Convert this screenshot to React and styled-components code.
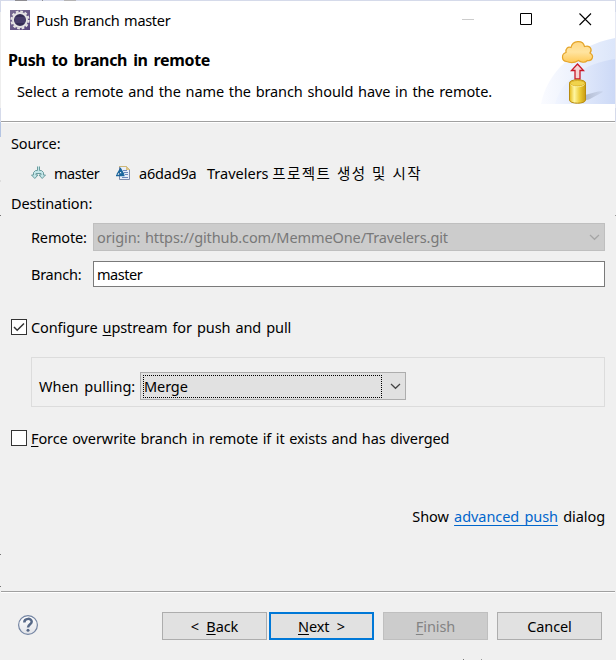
import React from 'react';
import styled, { createGlobalStyle } from 'styled-components';

const GlobalStyle = createGlobalStyle`
  * { box-sizing: border-box; }
  body { margin: 0; background: #f0f0f0; }
  button, input { font: inherit; }
`;

const Screen = styled.div`
  display: grid;
  grid-template-columns: 1px 614px 1px;
  grid-template-rows: 1px 659px;
  width: 616px;
  height: 660px;
  overflow: hidden;
  font-family: 'Noto Sans', 'Noto Sans CJK KR', sans-serif;
  font-size: 14.5px;
  line-height: 20px;
  color: #000;
`;

const TopEdge = styled.div`
  grid-column: 1 / -1;
  background: linear-gradient(90deg, #d5daea 0 15px, #8d8c91 15px 27px, #d5daea 27px 42px, #8d8c91 42px 43px, #d5daea 43px 64px, #b4b3b4 64px 76px, #d5daea 76px);
`;

const LeftEdge = styled.div`
  background: linear-gradient(#d5daea 0 11px, #eeeeee 11px 107px, #d5daea 107px 121px, #b4c4e2 121px 136px, #f0f0f0 136px 179px, #dedede 179px 181px, #f0f0f0 181px 214px, #777 214px 215px, #f0f0f0 215px 553px, #777 553px 554px, #f0f0f0 554px 585px, #777 585px 586px, #f0f0f0 586px);
`;

const RightEdge = styled.div`
  background: linear-gradient(#d5daea 0 11px, #e7eaf4 11px 107px, #d5daea 107px 121px, #f0f0f0 121px 214px, #999 214px 215px, #f0f0f0 215px);
`;

const Dialog = styled.main`
  display: flex;
  flex-direction: column;
  background: #f0f0f0;
`;

const TitleBar = styled.div`
  display: flex;
  align-items: center;
  height: 37px;
  padding-left: 9px;
  background: #fff;
`;

const Text = styled.span`
  white-space: pre;
  letter-spacing: ${(p) => p.$spacing || 0}px;
  word-spacing: ${(p) => p.$word || 0}px;
`;

const TitleText = styled(Text)`
  flex: 1;
  margin-left: 6px;
`;

const Controls = styled.div`
  display: flex;
  gap: 46px;
  margin-right: 23px;
`;

const Control = styled.svg`
  display: block;
  width: 13px;
  height: 13px;
`;

const Header = styled.header`
  display: flex;
  justify-content: space-between;
  height: 85px;
  background: #fff;
  border-bottom: 1px solid #fff;
  box-shadow: inset 0 -1px #a0a0a0;
`;

const HeaderText = styled.div`
  display: flex;
  flex-direction: column;
  gap: 11px;
  padding: 12px 0 0 7px;
`;

const Heading = styled.h1`
  margin: 0;
  font-size: 16px;
  line-height: 20px;
  font-weight: 700;
  letter-spacing: -0.35px;
  word-spacing: 2.2px;
  white-space: nowrap;
`;

const Description = styled(Text)`
  padding-left: 9px;
`;

const Content = styled.section`
  display: flex;
  flex-direction: column;
  height: 468px;
  padding: 10px 10px 0;
`;

const SourceRow = styled.div`
  display: flex;
  align-items: center;
  height: 20px;
  margin: 10px 0;
  padding-left: 20px;
`;

const Branch = styled(Text)`
  width: 61px;
  margin-left: 7px;
`;

const Commit = styled(Text)`
  width: 68px;
  margin-left: 8px;
`;

const Fields = styled.div`
  display: grid;
  grid-template-columns: 62px 512px;
  row-gap: 10px;
  align-items: center;
  margin: 10px 0 0 20px;
`;

const Combo = styled.div`
  display: flex;
  align-items: center;
  justify-content: space-between;
  width: ${(p) => p.$width}px;
  height: 28px;
  padding: 0 4px 0 2px;
  border: 1px solid ${(p) => (p.$disabled ? '#bfbfbf' : '#adadad')};
  background: ${(p) => (p.$disabled ? '#cccccc' : '#e1e1e1')};
  color: ${(p) => (p.$disabled ? '#787878' : '#000')};
`;

const ComboValue = styled(Text)`
  flex: 1;
  height: 23px;
  line-height: 20px;
  margin-right: ${(p) => (p.$focused ? 8 : 4)}px;
  border: ${(p) => (p.$focused ? '1px dotted #000' : '1px solid transparent')};
`;

const TextInput = styled.input`
  width: 512px;
  height: 26px;
  padding: 0 3px;
  border: 1px solid #7a7a7a;
  outline: none;
  background: #fff;
  color: #000;
  letter-spacing: -0.45px;
`;

const CheckRow = styled.label`
  display: flex;
  align-items: center;
  gap: 4px;
  height: 20px;
  margin-top: ${(p) => p.$top}px;
`;

const CheckBox = styled.span`
  display: flex;
  width: 16px;
  height: 16px;
  border: 1px solid #333;
  background: #fff;
`;

const Underlined = styled.span`
  text-decoration: underline;
  text-decoration-thickness: 1px;
  text-underline-offset: 2px;
  text-decoration-skip-ink: none;
`;

const Group = styled.div`
  display: flex;
  align-items: center;
  gap: 4px;
  height: 50px;
  margin: 20px 0 0 20px;
  padding: 8px 0 0 7px;
  border: 1px solid #dcdcdc;
`;

const PullLabel = styled(Text)`
  width: 97px;
`;

const Advanced = styled.div`
  margin-top: 58px;
  text-align: right;
`;

const Link = styled.a`
  color: #0066cc;
  text-decoration: underline;
  text-decoration-thickness: 1px;
  text-underline-offset: 3px;
  text-decoration-skip-ink: none;
`;

const Footer = styled.footer`
  display: flex;
  align-items: flex-start;
  height: 69px;
  padding: 19px 13px 0 16px;
  border-top: 1px solid #a0a0a0;
  box-shadow: inset 0 1px #fff;
  background: linear-gradient(#777, #777) 462px 100% / 1px 1px no-repeat, linear-gradient(#999, #999) 480px 100% / 1px 1px no-repeat;
`;

const Buttons = styled.div`
  display: flex;
  margin: 1px 0 0 auto;
`;

const Button = styled.button`
  width: 105px;
  height: 28px;
  margin-left: ${(p) => p.$gap || 0}px;
  padding: 0 0 1px;
  border: ${(p) => (p.$primary ? '2px solid #0078d7' : `1px solid ${p.disabled ? '#bfbfbf' : '#adadad'}`)};
  background: ${(p) => (p.disabled ? '#cccccc' : '#e1e1e1')};
  color: ${(p) => (p.disabled ? '#838383' : '#000')};
  letter-spacing: -0.1px;
  white-space: pre;
`;

const Icon = styled.svg`
  display: block;
  flex: none;
`;

const Chevron = ({ color }) => (
  <Icon width="11" height="8" viewBox="0 0 11 8" fill="none">
    <path d="M1 2l4.500 4.300L10 2" stroke={color} strokeWidth="1.2" />
  </Icon>
);

const AppIcon = () => (
  <Icon width="20" height="20" viewBox="0 0 20 20">
    <defs>
      <linearGradient id="gear" x2="1" y2="1">
        <stop stopColor="#796d92" /><stop offset="1" stopColor="#57447d" />
      </linearGradient>
    </defs>
    <rect width="20" height="20" fill="url(#gear)" />
    <circle cx="10" cy="10" r="8.6" fill="none" stroke="#e8e5e5" strokeWidth="2" strokeDasharray="2.7 1.803" />
    <circle cx="10" cy="10" r="7" fill="#342c54" stroke="#e4e2e4" strokeWidth="2" />
    <path d="M5 8h10M4.500 10h11M5 12h10" stroke="#62568a" strokeWidth=".8" />
  </Icon>
);

const Banner = () => (
  <Icon width="74" height="66" viewBox="0 0 74 66">
    <defs>
      <linearGradient id="outer"><stop stopColor="#fafbff" /><stop offset="1" stopColor="#dce6fa" /></linearGradient>
      <linearGradient id="inner"><stop stopColor="#f1f5ff" /><stop offset="1" stopColor="#ccd9f6" /></linearGradient>
      <linearGradient id="cloud" x2="0" y2="1"><stop stopColor="#ffd884" /><stop offset=".5" stopColor="#ffe4a0" /><stop offset="1" stopColor="#ffc956" /></linearGradient>
      <linearGradient id="drum"><stop stopColor="#e5ba19" /><stop offset=".3" stopColor="#fff6a1" /><stop offset=".65" stopColor="#eccb35" /><stop offset="1" stopColor="#c99b13" /></linearGradient>
      <linearGradient id="shade"><stop stopColor="#8d96ad" stopOpacity=".6" /><stop offset="1" stopColor="#a9b4cc" stopOpacity=".25" /></linearGradient>
    </defs>
    <path d="M0 66C6 35 33 8 74 0v66z" fill="url(#outer)" />
    <path d="M14 66C20 43 43 25 74 21v45z" fill="url(#inner)" />
    <path d="M44 57l13-3.500q7-1 4 1L48 61.500l-5 1z" fill="url(#shade)" />
    <path d="M25.500 23.500C20.500 23 20 16 25 14.500C24.500 10 27 8.500 30 9.500C31.500 2 42 1.500 43.500 8.500C49.500 6.500 51.500 12 49 15C53.500 17.500 51.500 23.500 46.500 22.500C43.500 25.500 39.500 24 37.500 22.500C33.500 25 29 25 25.500 23.500Z" fill="url(#cloud)" stroke="#e5a52a" strokeWidth="1.2" />
    <path d="M36.500 26l6 6.500h-3.500V41h-5v-8.500h-3.500z" fill="#f6d3d4" stroke="#c91a2a" strokeWidth="1.300" />
    <path d="M28.500 45c0-4.300 16-4.300 16 0v17c0 4.300-16 4.300-16 0z" fill="url(#drum)" stroke="#b98c10" />
    <ellipse cx="36.500" cy="45.300" rx="7.500" ry="2.800" fill="#f0d34c" stroke="#d0a41b" strokeWidth=".8" />
    <path d="M29.500 46.500c2 3 12 3 14 0" fill="none" stroke="#fff5ad" strokeWidth=".8" />
  </Icon>
);

const BranchIcon = () => (
  <Icon width="16" height="16" viewBox="0 0 16 16" fill="none">
    <path d="M6.500 1.500v4h-2L2.500 7.500V10H.5L3.800 13.500 7 10H5V8.500h5V10H8L11.200 13.500 14.500 10h-2V7.500L10.500 5.500h-2v-4" fill="#c3e6e8" stroke="#6c9c9e" />
    <path d="M5.500 8.500h4" stroke="#6c9c9e" />
  </Icon>
);

const CommitIcon = () => (
  <Icon width="16" height="16" viewBox="0 0 16 16" fill="none">
    <path d="M4.500 1.500h7l3 3v10h-10z" fill="#e8eef9" stroke="#7b89aa" />
    <path d="M4 1.500h7.500l3 3" stroke="#cdb779" />
    <path d="M11 1v4h4z" fill="#dcc384" />
    <path d="M8 5.500h4M9 7.500h4M10 9.500h3M7 12.500h6" stroke="#6d89bc" />
    <path d="M1 10.500h8.500M2 9.500l3.500-6 3.500 6M4 8l1.500-3.500 2 4.500H4.500" stroke="#19659c" strokeWidth="1.300" />
  </Icon>
);

const HelpIcon = () => (
  <Icon width="22" height="28" viewBox="0 0 22 28">
    <defs><linearGradient id="help" x2="0" y2="1"><stop stopColor="#fff" /><stop offset="1" stopColor="#e1e3e8" /></linearGradient></defs>
    <circle cx="11" cy="14" r="9.400" fill="url(#help)" stroke="#7384a2" strokeWidth="1.200" />
    <path d="M7.300 11.500C7.300 6.800 14.700 6.800 14.700 10.700C14.700 13.200 11 13.200 11 16.500" fill="none" stroke="#566887" strokeWidth="2.500" />
    <circle cx="11" cy="19.300" r="1.500" fill="#566887" />
  </Icon>
);

export default function App() {
  return (
    <Screen>
      <GlobalStyle />
      <TopEdge />
      <LeftEdge />
      <Dialog>
        <TitleBar>
          <AppIcon />
          <TitleText $spacing={-0.3} $word={1.2}>Push Branch master</TitleText>
          <Controls>
            <Control viewBox="0 0 13 13"><path d="M1 6.500h12" stroke="#ccc" /></Control>
            <Control viewBox="0 0 13 13"><path d="M.5.5h11v11H.5z" fill="none" stroke="#000" /></Control>
            <Control viewBox="0 0 13 13"><path d="M.5.5l11.500 11.500m0-11.500l-11.500 11.500" stroke="#000" strokeWidth="1.100" /></Control>
          </Controls>
        </TitleBar>
        <Header>
          <HeaderText>
            <Heading>Push to branch in remote</Heading>
            <Description $spacing={-0.1} $word={1.14}>Select a remote and the name the branch should have in the remote.</Description>
          </HeaderText>
          <Banner />
        </Header>
        <Content>
          <Text $spacing={-0.15}>Source:</Text>
          <SourceRow>
            <BranchIcon />
            <Branch $spacing={-0.45}>master</Branch>
            <CommitIcon />
            <Commit $spacing={-0.2}>a6dad9a</Commit>
            <Text>Travelers <Text $spacing={1.4} $word={0.5}>프로젝트 생성 및 시작</Text></Text>
          </SourceRow>
          <Text $spacing={-0.1}>Destination:</Text>
          <Fields>
            <Text $spacing={-0.15}>Remote:</Text>
            <Combo $disabled $width={512}>
              <ComboValue $spacing={-0.1} $word={1}>origin: https://github.com/MemmeOne/Travelers.git</ComboValue>
              <Chevron color="#a5a5a5" />
            </Combo>
            <Text $spacing={-0.25}>Branch:</Text>
            <TextInput defaultValue="master" />
          </Fields>
          <CheckRow $top={30}>
            <CheckBox>
              <Icon width="14" height="14" viewBox="0 0 14 14"><path d="M2 7l3.200 3.200L12 3.500" fill="none" stroke="#333" strokeWidth="1.500" /></Icon>
            </CheckBox>
            <Text $spacing={-0.1} $word={1.4}>Configure <Underlined>u</Underlined>pstream for push and pull</Text>
          </CheckRow>
          <Group>
            <PullLabel $word={2}>When pulling:</PullLabel>
            <Combo $width={266}>
              <ComboValue $focused $spacing={-0.1}>Merge</ComboValue>
              <Chevron color="#444" />
            </Combo>
          </Group>
          <CheckRow $top={21}>
            <CheckBox />
            <Text $spacing={-0.1} $word={0.9}><Underlined>F</Underlined>orce overwrite branch in remote if it exists and has diverged</Text>
          </CheckRow>
          <Advanced><Text $spacing={-0.06} $word={1.5}>Show <Link>advanced push</Link> dialog</Text></Advanced>
        </Content>
        <Footer>
          <HelpIcon />
          <Buttons>
            <Button>{'<  '}<Underlined>B</Underlined>ack</Button>
            <Button $primary $gap={2}><Underlined>N</Underlined>ext {' >'}</Button>
            <Button disabled $gap={9}><Underlined>F</Underlined>inish</Button>
            <Button $gap={9}>Cancel</Button>
          </Buttons>
        </Footer>
      </Dialog>
      <RightEdge />
    </Screen>
  );
}
